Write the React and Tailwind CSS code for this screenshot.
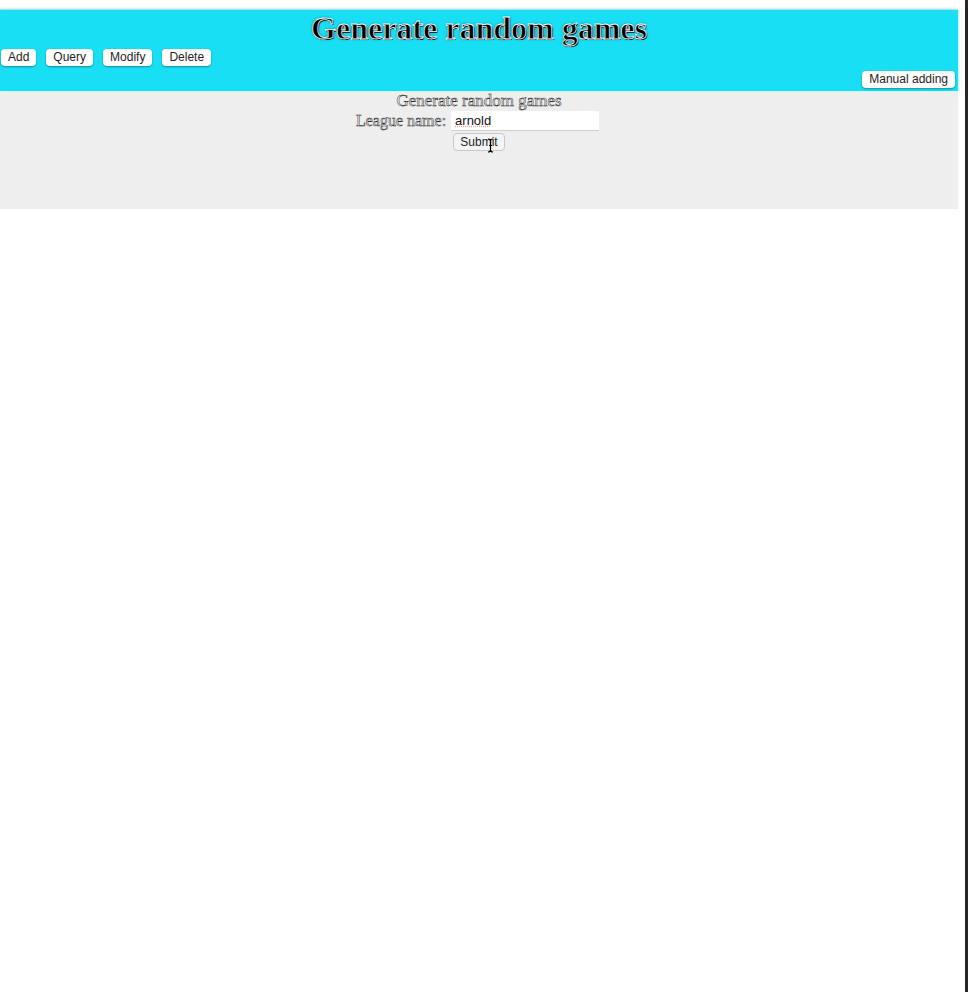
import React from 'react';

const navButtons = ['Add', 'Query', 'Modify', 'Delete'];

function NavButton({ label }) {
    return (
        <button
            type="button"
            className="h-[17px] px-[7px] rounded-[4px] bg-white text-[12px] leading-[17px] text-[#222] shadow-[0_1px_2px_rgba(0,0,0,0.35)] [font-family:'Liberation_Sans',Arial,sans-serif]"
        >
            {label}
        </button>
    );
}

export default function App() {
    return (
        <div className="flex min-h-[992px] w-full bg-white">
            <div className="w-[958px] pt-[9px]">
                {/* header */}
                <div className="border-t border-[#cfd3d6] bg-[#19dff5] shadow-[0_0_3px_#6ff0ff]">
                    <h1 className="text-center text-[32px] font-bold leading-[37px] text-black [-webkit-text-stroke:0.8px_white] [text-shadow:1px_1px_0_#000,0_0_3px_#0b6c7a] [font-family:'Liberation_Serif','Times_New_Roman',serif]">
                        Generate random games
                    </h1>
                    <div className="mt-[2px] flex gap-[10px] pl-[1px]">
                        {navButtons.map((b) => (
                            <NavButton key={b} label={b} />
                        ))}
                    </div>
                    <div className="flex justify-end pr-[3px] pt-[5px] pb-[3px]">
                        <NavButton label="Manual adding" />
                    </div>
                </div>

                {/* form panel */}
                <div className="mt-px h-[117px] bg-[#eeeeee] [font-family:'Liberation_Serif','Times_New_Roman',serif]">
                    <div className="h-[18px] text-center text-[17px] leading-[18px] text-white [-webkit-text-stroke:0.5px_#222]">
                        Generate random games
                    </div>
                    <div className="mt-[1px] flex h-[20px] items-center justify-center gap-[5px] pr-[3px]">
                        <span className="text-[16px] leading-[18px] text-white [-webkit-text-stroke:0.5px_#222]">League name:</span>
                        <input
                            defaultValue="arnold"
                            className="h-[20px] w-[148px] border-b border-[#cfcfcf] bg-white px-[4px] text-[13px] leading-[18px] text-[#111] outline-none [font-family:'Liberation_Sans',Arial,sans-serif] underline decoration-dotted decoration-[#e8a0a0]"
                        />
                    </div>
                    <div className="mt-[2px] flex justify-center">
                        <div className="relative flex h-[18px]">
                            <button
                                type="button"
                                className="h-[18px] rounded-[4px] border border-[#c8c8c8] bg-[#f4f4f4] px-[6px] text-[12px] leading-[15px] text-[#222] [font-family:'Liberation_Sans',Arial,sans-serif]"
                            >
                                Submit
                            </button>
                            {/* mouse text cursor */}
                            <svg className="absolute left-[34px] top-[5px]" width="7" height="15" viewBox="0 0 7 15">
                                <path d="M1 1 Q3.5 1 3.5 3 Q3.5 1 6 1 M3.5 3 V12 M1 14 Q3.5 14 3.5 12 Q3.5 14 6 14 M2 7.5 H5" fill="none" stroke="#000" strokeWidth="1.2" />
                            </svg>
                        </div>
                    </div>
                </div>
            </div>
            <div className="flex-1" />
            <div className="w-[3px] bg-[#262626]" />
        </div>
    );
}
